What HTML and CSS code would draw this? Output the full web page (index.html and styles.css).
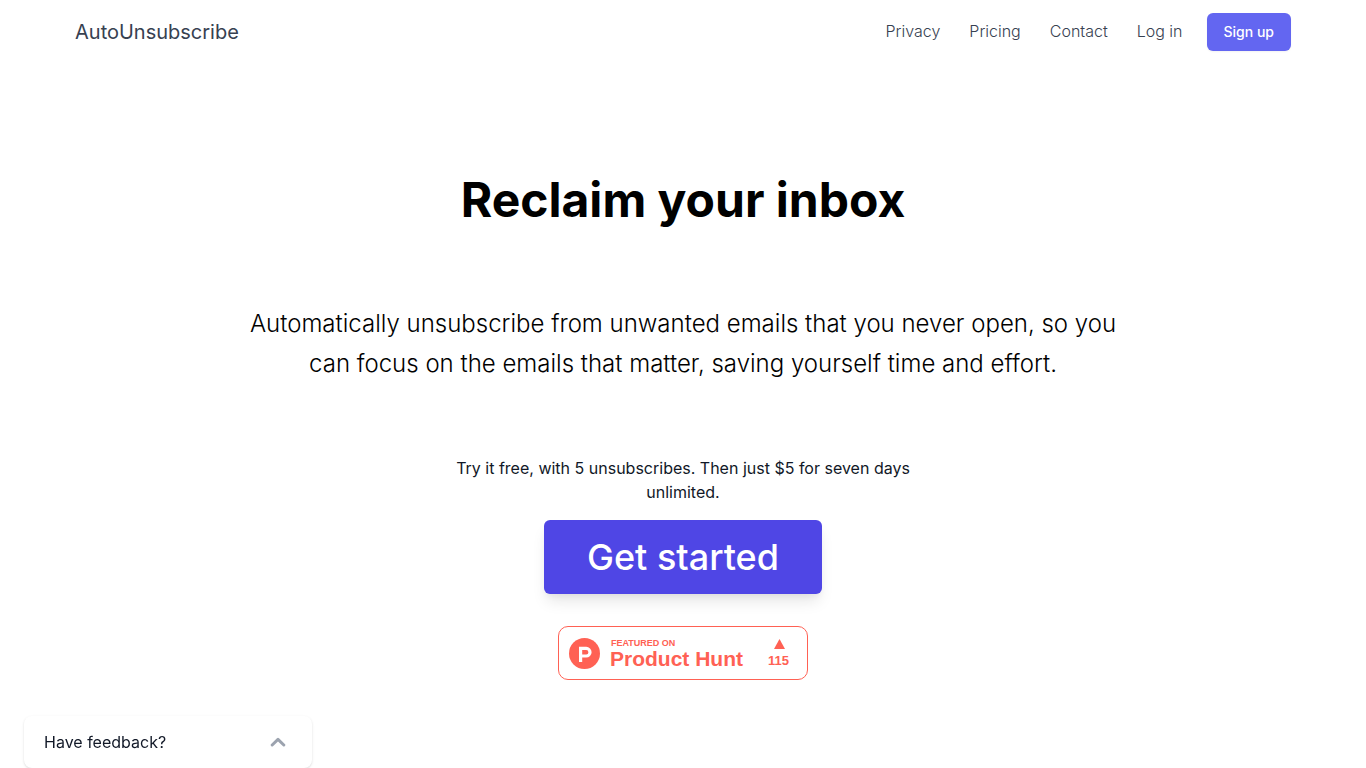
FILE: index.html
```html
<!DOCTYPE html>
<html lang="en">
<head>
  <meta charset="UTF-8" />
  <meta name="viewport" content="width=device-width, initial-scale=1" />
  <title>AutoUnsubscribe</title>
  <link rel="stylesheet" href="styles.css">
</head>
<body>
  <header class="site-header">
    <a class="brand" href="#">AutoUnsubscribe</a>
    <nav class="site-nav">
      <a class="nav-link" href="#">Privacy</a>
      <a class="nav-link" href="#">Pricing</a>
      <a class="nav-link" href="#">Contact</a>
      <a class="nav-link" href="#">Log in</a>
      <button class="signup-btn" type="button">Sign up</button>
    </nav>
  </header>

  <main class="hero">
    <h1 class="hero-title">Reclaim your inbox</h1>
    <p class="hero-text">Automatically unsubscribe from unwanted emails that you never open, so you can focus on the emails that matter, saving yourself time and effort.</p>
    <p class="hero-offer">Try it free, with 5 unsubscribes. Then just $5 for seven days unlimited.</p>
    <button class="start-btn" type="button">Get started</button>

    <a class="ph-badge" href="#">
      <svg class="ph-logo" viewBox="0 0 31 31" aria-hidden="true">
        <circle cx="15.5" cy="15.5" r="15.5" fill="#ff6154" />
        <path fill="#fff" fill-rule="evenodd" d="M10 8.8h7.2a5.3 5.3 0 0 1 0 10.8h-4v4.4H10zM13.2 12v4.4h4a2.2 2.2 0 0 0 0-4.4z" />
      </svg>
      <span class="ph-name">
        <span class="ph-label">FEATURED ON</span>
        <span class="ph-title">Product Hunt</span>
      </span>
      <span class="ph-votes">
        <svg class="ph-arrow" viewBox="0 0 12 10" aria-hidden="true">
          <path fill="#ff6154" d="M6.5 0L12 10H1z" />
        </svg>
        <span class="ph-count">115</span>
      </span>
    </a>
  </main>

  <button class="feedback" type="button">
    <span>Have feedback?</span>
    <svg class="feedback-icon" viewBox="0 0 16 10" aria-hidden="true">
      <path d="M2.2 8L8 2.4 13.8 8" fill="none" stroke="#9ca3af" stroke-width="3" stroke-linecap="round" stroke-linejoin="round" />
    </svg>
  </button>
</body>
</html>
```

FILE: styles.css
```css
* {
  box-sizing: border-box;
}
body {
  margin: 0;
  background: #fff;
  color: #000;
  font-family: Inter, "Liberation Sans", sans-serif;
  font-size: 16px;
  line-height: 24px;
}
h1, p {
  margin: 0;
}
a {
  color: inherit;
  text-decoration: none;
}
button {
  font: inherit;
  cursor: pointer;
}

.site-header {
  display: flex;
  align-items: center;
  justify-content: space-between;
  max-width: 1280px;
  height: 64px;
  margin: 0 auto;
  padding: 0 32px;
  color: #374151;
}
.brand {
  font-size: 20px;
  line-height: 28px;
}
.site-nav {
  display: flex;
  align-items: center;
  font-weight: 300;
}
.nav-link {
  margin-right: 29px;
  padding-bottom: 2px;
}
.nav-link:last-of-type {
  margin-right: 24px;
}
.signup-btn {
  padding: 8px 16px;
  border: 1px solid transparent;
  border-radius: 6px;
  background: #6366f1;
  box-shadow: 0 1px 2px rgba(0, 0, 0, 0.05);
  color: #fff;
  font-size: 14px;
  font-weight: 500;
  line-height: 20px;
}
.signup-btn:hover {
  background: #4f46e5;
}

.hero {
  display: flex;
  flex-direction: column;
  align-items: center;
  padding: 112px 32px 88px;
  text-align: center;
}
.hero-title {
  font-size: 48px;
  font-weight: 700;
  line-height: 48px;
}
.hero-text {
  max-width: 896px;
  margin-top: 80px;
  font-size: 24px;
  font-weight: 300;
  line-height: 40px;
}
.hero-offer {
  max-width: 480px;
  margin-top: 72px;
  color: #111827;
}
.start-btn {
  margin-top: 16px;
  padding: 16px 42px;
  border: 1px solid transparent;
  border-radius: 6px;
  background: #4f46e5;
  box-shadow: 0 10px 15px -3px rgba(0, 0, 0, 0.1), 0 4px 6px -2px rgba(0, 0, 0, 0.05);
  color: #fff;
  font-size: 36px;
  font-weight: 500;
  line-height: 40px;
}
.start-btn:hover {
  background: #4338ca;
}

.ph-badge {
  display: flex;
  align-items: center;
  width: 250px;
  height: 54px;
  margin-top: 32px;
  padding: 0 18px 0 10px;
  border: 1px solid #ff6154;
  border-radius: 10px;
  color: #ff6154;
  font-family: "Liberation Sans", Arial, sans-serif;
  font-weight: 700;
  text-align: left;
}
.ph-logo {
  width: 31px;
  height: 31px;
}
.ph-name {
  display: flex;
  flex-direction: column;
  margin-left: 10px;
  padding-top: 2px;
}
.ph-label {
  padding-left: 1px;
  font-size: 9px;
  line-height: 10px;
}
.ph-title {
  font-size: 21px;
  line-height: 22px;
}
.ph-votes {
  display: flex;
  flex-direction: column;
  align-items: center;
  gap: 5px;
  margin-left: auto;
}
.ph-arrow {
  width: 12px;
  height: 10px;
}
.ph-count {
  font-size: 13px;
  line-height: 14px;
}

.feedback {
  position: fixed;
  bottom: 0;
  left: 24px;
  display: flex;
  align-items: center;
  justify-content: space-between;
  width: 288px;
  height: 52px;
  padding: 0 26px 0 20px;
  border: 0;
  border-radius: 8px;
  background: #fff;
  box-shadow: 0 1px 3px rgba(0, 0, 0, 0.1), 0 1px 2px rgba(0, 0, 0, 0.06);
  color: #111827;
}
.feedback-icon {
  width: 16px;
  height: 10px;
}
```
